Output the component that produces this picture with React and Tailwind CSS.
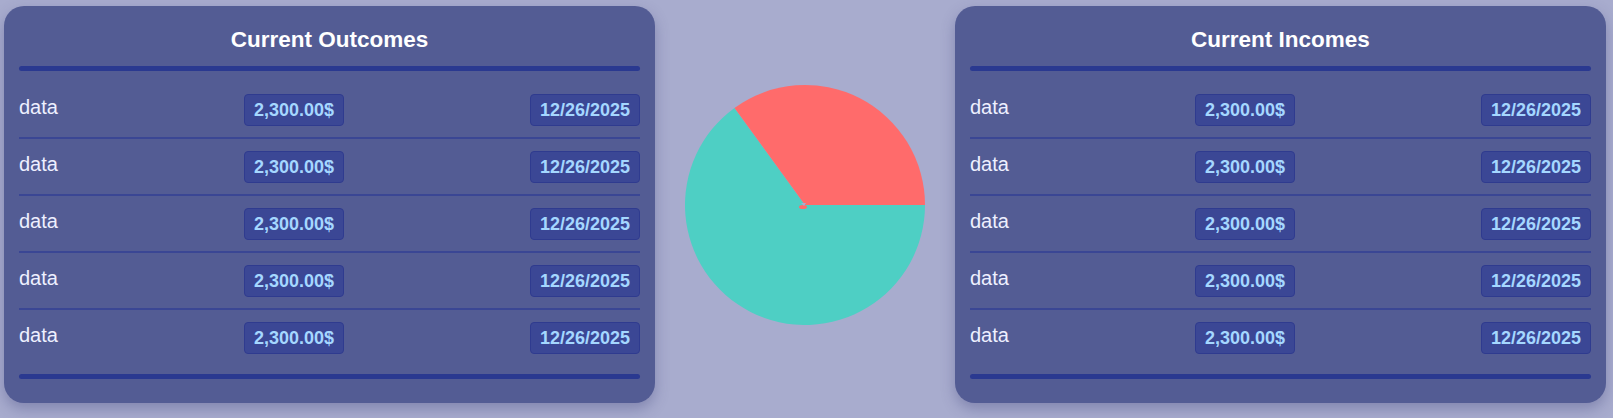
import React from "react";

const ROWS = [
  { label: "data", amount: "2,300.00$", date: "12/26/2025" },
  { label: "data", amount: "2,300.00$", date: "12/26/2025" },
  { label: "data", amount: "2,300.00$", date: "12/26/2025" },
  { label: "data", amount: "2,300.00$", date: "12/26/2025" },
  { label: "data", amount: "2,300.00$", date: "12/26/2025" },
];

const Badge = ({ children }) => (
  <span className="h-[32px] px-[9px] flex items-center rounded-[4px] border border-[#2f3b8f] bg-[#3b4795] text-[#a5d7ff] text-[18px] font-bold leading-none">
    {children}
  </span>
);

const TransactionCard = ({ title, rows }) => (
  <div className="w-[651px] rounded-[20px] bg-[#535c94] px-[15px] pt-[21px] pb-[24px] shadow-[0_6px_14px_rgba(60,64,120,0.35)]">
    <h2 className="text-center text-white text-[22.5px] font-bold leading-[25px]">
      {title}
    </h2>
    <div className="mt-[14px] h-[5px] rounded-full bg-[#2a3990]" />

    <ul className="mt-[11px]">
      {rows.map((row, i) => (
        <li
          key={i}
          className={
            "flex items-center justify-between pt-[12px] pb-[11px] " +
            (i < rows.length - 1 ? "border-b-2 border-[#3a4694]" : "")
          }
        >
          <span className="text-[20px] text-[#eef0ff] pb-[5px] leading-[23px]">
            {row.label}
          </span>
          <Badge>{row.amount}</Badge>
          <Badge>{row.date}</Badge>
        </li>
      ))}
    </ul>

    <div className="mt-[9px] h-[5px] rounded-full bg-[#2a3990]" />
  </div>
);

const PieChart = () => (
  <svg width="240" height="240" viewBox="0 0 240 240">
    <path d="M120 120 L49.5 22.9 A120 120 0 1 0 240 120 Z" fill="#4ecfc4" />
    <path d="M120 120 L240 120 A120 120 0 0 0 49.5 22.9 Z" fill="#ff6b6b" />
    <ellipse cx="118" cy="122" rx="4" ry="2" fill="#ff6b6b" />
    <path d="M116 118 L121 118 L119 121 Z" fill="#a8acd0" />
  </svg>
);

export default function App() {
  return (
    <div
      className="min-h-screen bg-[#a8acce] flex items-start pt-[6px] pl-[4px] pr-[7px]"
      style={{ fontFamily: '"Liberation Sans", Arial, sans-serif' }}
    >
      <TransactionCard title="Current Outcomes" rows={ROWS} />
      <div className="flex-1 flex justify-center pt-[79px]">
        <PieChart />
      </div>
      <TransactionCard title="Current Incomes" rows={ROWS} />
    </div>
  );
}
